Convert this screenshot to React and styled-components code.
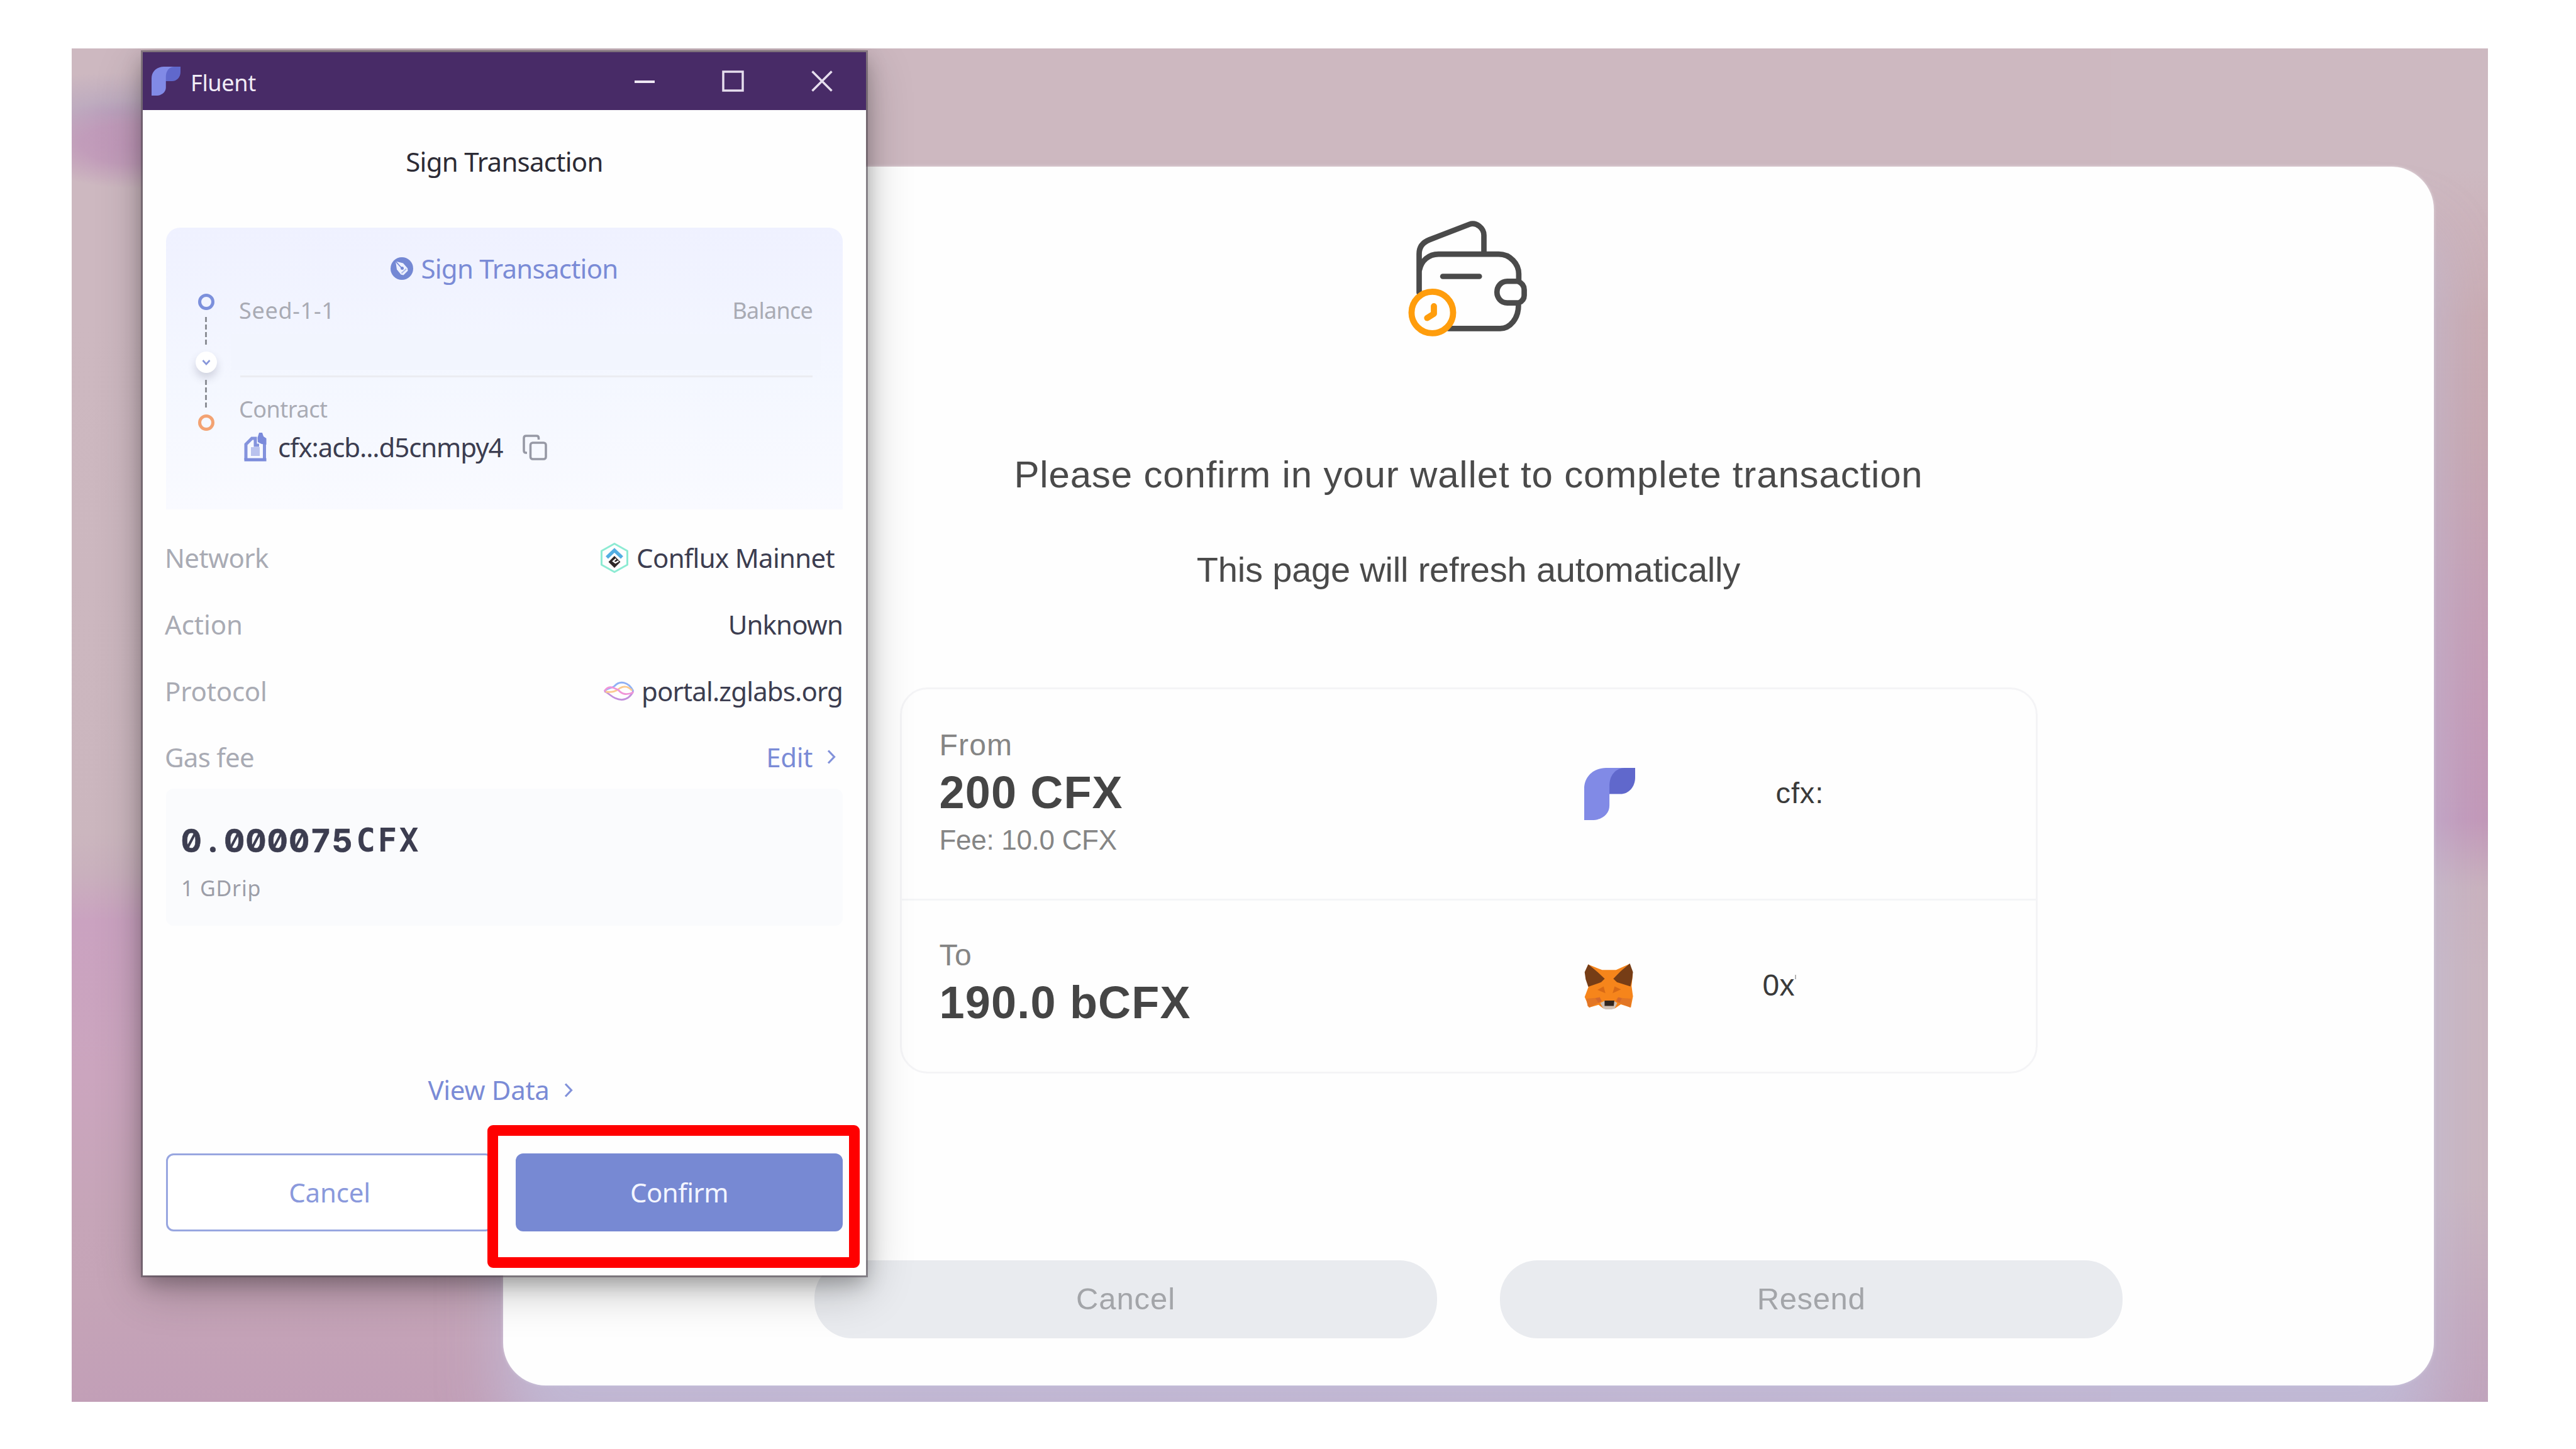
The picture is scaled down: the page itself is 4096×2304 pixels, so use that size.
import React from "react";
import styled, { createGlobalStyle } from "styled-components";

const Global = createGlobalStyle`
  * { box-sizing: border-box; }
  body { margin: 0; background: #fff; }
`;

const ui = `"Noto Sans", sans-serif`;
const web = `"Liberation Sans", Arial, sans-serif`;

/* ---------- text ---------- */

const Text = styled.span`
  display: block;
  white-space: nowrap;
  font-family: ${(p) => p.$font || ui};
  font-size: ${(p) => p.$size || 42}px;
  font-weight: ${(p) => p.$weight || 400};
  line-height: ${(p) => p.$line || 60}px;
  letter-spacing: ${(p) => p.$track || 0}px;
  color: ${(p) => p.$color || "#3c3d50"};
`;

/* ---------- page ---------- */

const Page = styled.div`
  width: 4096px;
  height: 2304px;
  padding: 77px 140px 75px 114px;
  background: #fff;
  overflow: hidden;
`;

const Stage = styled.div`
  position: relative;
  width: 3842px;
  height: 2152px;
  padding: 188px 0 0 686px;
  overflow: hidden;
  background:
    radial-gradient(ellipse 175px 70px at 95px 152px, #c098b9 0%, rgba(192, 152, 185, 0.85) 45%, rgba(192, 152, 185, 0) 100%),
    radial-gradient(ellipse 210px 66px at 70px 104px, rgba(176, 160, 190, 0.75) 0%, rgba(176, 160, 190, 0) 100%),
    linear-gradient(180deg, #cdb9c1 0%, #cdb9c1 9%, #ccb3bb 13%, #c9abb2 20%, #c7a7b0 29%, #c59fb4 40%, #c49ab6 49%, #c297b8 57%, #c9b1bd 62%, #cab5bf 68%, #cab5bf 84%, #c4a9bd 94%, #c1a4bc 100%) right top / 600px 100% no-repeat,
    linear-gradient(180deg, #cdb8c0 0%, #cdb8c0 20%, #cbb6be 58%, #c9b0bd 61%, #caa2c0 64.5%, #cba5be 76%, #c6a5b8 86%, #c5a4b7 92%, #c29fb7 100%);
`;

const DappCard = styled.main`
  display: flex;
  flex-direction: column;
  align-items: center;
  width: 3070px;
  height: 1938px;
  padding-top: 84px;
  border-radius: 68px;
  background: #fefefe;
  box-shadow: 0 100px 100px 0 rgba(192, 192, 222, 0.75), 0 0 5px rgba(255, 255, 255, 0.5);
`;

const WalletFigure = styled.figure`
  display: flex;
  height: 188px;
  margin: 0 2px 0 0;
`;

const Headline = styled(Text)`
  margin-top: 178px;
`;

const Subline = styled(Text)`
  margin-top: 71px;
`;

const Transfer = styled.section`
  width: 1809px;
  margin-top: 147px;
  border: 3px solid #f4f4f6;
  border-radius: 44px;
`;

const TransferRow = styled.div`
  display: flex;
  align-items: center;
  height: ${(p) => p.$height}px;
  padding-left: 60px;
  & + & {
    border-top: 3px solid #f4f5f7;
  }
`;

const Amount = styled.div`
  display: flex;
  flex-direction: column;
  width: 1025px;
  padding-bottom: 10px;
`;

const AmountValue = styled(Text)`
  margin-top: 2px;
  margin-bottom: ${(p) => p.$after || 0}px;
`;

const Brand = styled.div`
  display: flex;
  align-items: center;
  width: 82px;
`;

const Address = styled.div`
  display: flex;
  margin-left: ${(p) => p.$indent}px;
  padding-bottom: 3px;
`;

const Clipped = styled.i`
  width: 2px;
  height: 7px;
  margin: 13px 0 0 0;
  background: #b5b5b5;
`;

const PillRow = styled.div`
  display: flex;
  gap: 100px;
  margin-top: 297px;
`;

const Pill = styled.button`
  display: flex;
  align-items: center;
  justify-content: center;
  width: 990px;
  height: 124px;
  padding: 0 0 3px;
  border: 0;
  border-radius: 60px;
  background: #e9ebef;
`;

/* ---------- wallet window ---------- */

const Window = styled.aside`
  position: absolute;
  left: 113px;
  top: 6px;
  width: 1150px;
  height: 1945px;
  display: flex;
  flex-direction: column;
  background: #fefefe;
  box-shadow: 0 0 0 3px rgba(82, 72, 84, 0.55), 0 12px 30px rgba(0, 0, 0, 0.26), 0 22px 70px rgba(0, 0, 0, 0.24);
`;

const TitleBar = styled.header`
  display: flex;
  align-items: center;
  height: 92px;
  padding: 0 53px 0 14px;
  background: #482b67;
`;

const AppName = styled(Text)`
  flex: 1;
  margin-left: 16px;
  padding-top: 5px;
`;

const Controls = styled.div`
  display: grid;
  grid-template-columns: 32px 35px 34px;
  column-gap: 107px;
  align-items: center;
`;

const Body = styled.div`
  display: flex;
  flex-direction: column;
  padding: 0 37px;
`;

const Heading = styled(Text)`
  margin: 52px 0 75px;
  text-align: center;
`;

const Card = styled.section`
  height: 448px;
  padding-top: 35px;
  border-radius: 22px 22px 0 0;
  background: linear-gradient(180deg, #eff1ff 0%, #f4f7ff 55%, #f9faff 100%);
`;

const CardTitle = styled.div`
  display: flex;
  align-items: center;
  justify-content: center;
  gap: 12px;
`;

const Route = styled.div`
  display: flex;
  padding: 0 48px 0 47px;
`;

const Rail = styled.div`
  display: flex;
  flex-direction: column;
  align-items: center;
  gap: 11px;
  width: 33px;
  padding-top: 10px;
`;

const Ring = styled.i`
  width: 26px;
  height: 26px;
  border: 5.5px solid ${(p) => p.$color};
  border-radius: 50%;
`;

const Dashes = styled.i`
  width: 3px;
  height: 44px;
  background: repeating-linear-gradient(180deg, #8d9097 0 8px, transparent 8px 12px);
`;

const Down = styled.i`
  display: flex;
  align-items: center;
  justify-content: center;
  width: 34px;
  height: 34px;
  border-radius: 50%;
  background: #fff;
  box-shadow: 0 8px 14px rgba(60, 60, 90, 0.2);
`;

const Parties = styled.div`
  flex: 1;
  margin-left: 36px;
  padding-top: 12px;
`;

const Between = styled.div`
  display: flex;
  justify-content: space-between;
`;

const BlankBalance = styled.div`
  height: 57px;
  margin: 12px -13px 9px -12px;
  background: #f2f5fe;
`;

const Divider = styled.hr`
  height: 3px;
  margin: 0 0 0 2px;
  border: 0;
  background: #ebecf1;
`;

const ContractLabel = styled(Text)`
  margin-top: 26px;
`;

const ContractRow = styled.div`
  display: flex;
  align-items: center;
  margin-top: 5px;
  padding-left: 8px;
`;

const ContractAddress = styled(Text)`
  margin: 0 32px 0 18px;
`;

const Details = styled.dl`
  display: grid;
  grid-template-rows: 106px 106px 105px 105px;
  margin: 24px 0 -2px;
`;

const Detail = styled.div`
  display: flex;
  align-items: center;
  justify-content: space-between;
`;

const DetailName = styled(Text)`
  margin-left: -2px;
`;

const DetailValue = styled.div`
  display: flex;
  align-items: center;
  gap: ${(p) => p.$gap || 0}px;
  padding-right: ${(p) => p.$inset || 0}px;
`;

const GasBox = styled.section`
  height: 218px;
  padding: 51px 23px 0;
  border-radius: 12px;
  background: #fafbfd;
`;

const GasAmount = styled.div`
  display: flex;
  height: 64px;
`;

const Digit = styled(Text)`
  width: 34.3px;
  text-align: center;
  font-feature-settings: "zero", "tnum";
  -webkit-text-stroke: 0.6px currentColor;
`;

const Unit = styled(Text)`
  width: 34.3px;
  margin-left: ${(p) => (p.$first ? 3 : 0)}px;
  text-align: center;
`;

const GasPrice = styled(Text)`
  margin: 19px 0 0 1px;
`;

const ViewData = styled.a`
  display: flex;
  align-items: center;
  justify-content: center;
  gap: 23px;
  margin-top: 231px;
  padding-right: 13px;
`;

const Actions = styled.div`
  display: flex;
  gap: 36px;
  margin-top: 71px;
`;

const Action = styled.button`
  display: flex;
  align-items: center;
  justify-content: center;
  flex: 1;
  height: 124px;
  padding: 0;
  border: 3px solid ${(p) => (p.$primary ? "#7789d3" : "#98a6e0")};
  border-radius: 12px;
  background: ${(p) => (p.$primary ? "#7789d3" : "#fff")};
`;

const Highlight = styled.div`
  position: absolute;
  left: 548px;
  top: 1706px;
  width: 592px;
  height: 227px;
  border: 17px solid #ff0000;
  border-radius: 9px;
`;

/* ---------- drawings ---------- */

const FluentLogo = ({ w, h }) => (
  <svg width={w} height={h} viewBox="0 0 100 100" preserveAspectRatio="none">
    <path d="M0 100V40C0 17 18 0 43 0H90V30L49.5 50V72C49.5 88 36 100 15 100Z" fill="#818ae6" />
    <path d="M49.5 50V34C49.5 14 62 0 80 0H100V18C100 37 87 50 71 50Z" fill="#6068cc" />
  </svg>
);

const Minimise = () => (
  <svg width="32" height="34" viewBox="0 0 32 34"><path d="M0 18H32" stroke="#efe9f4" strokeWidth="4" /></svg>
);
const Maximise = () => (
  <svg width="35" height="34" viewBox="0 0 35 34"><rect x="2" y="2" width="31" height="30" fill="none" stroke="#e6deee" strokeWidth="3.5" /></svg>
);
const Close = () => (
  <svg width="34" height="34" viewBox="0 0 34 34"><path d="M1.500 1.500L32.500 32.500M32.500 1.500L1.500 32.500" stroke="#e6deee" strokeWidth="3.500" /></svg>
);

const PenBadge = () => (
  <svg width="36" height="36" viewBox="0 0 36 36">
    <circle cx="18" cy="18" r="18" fill="#7488d4" />
    <path d="M8 6.500L20 9.500L27 17.500L27.500 21.500L20.500 28.500L16.500 27.500L10 19.500Z" fill="#eef1ff" />
    <path d="M8 6.500L17.500 17" stroke="#7488d4" strokeWidth="1.800" />
    <circle cx="18.500" cy="17.500" r="2.500" fill="#7488d4" />
    <path d="M17.500 25.500L25 18.500" stroke="#a9b6e8" strokeWidth="1.800" />
  </svg>
);

const SmallDown = () => (
  <svg width="14" height="9" viewBox="0 0 14 9"><path d="M1.500 1L7 7L12.500 1" fill="none" stroke="#8796da" strokeWidth="2.600" /></svg>
);

const ContractIcon = () => (
  <svg width="36" height="46" viewBox="0 0 36 46">
    <path d="M3 43V18.500L12.500 9H18V20H24M32.500 12V43" fill="none" stroke="#8493dd" strokeWidth="5" />
    <path d="M0.500 43H35.500" stroke="#7c8cdb" strokeWidth="5" />
    <path d="M21.500 8L24 0H29L31 6L35.500 9V19L28 18L22 15Z" fill="#7a8adb" />
    <rect x="11" y="23" width="14" height="14" fill="#b9c2ee" />
  </svg>
);

const CopyIcon = () => (
  <svg width="39" height="41" viewBox="0 0 39 41" fill="none" stroke="#9799a5" strokeWidth="3.600">
    <rect x="12.500" y="13" width="24.500" height="26" rx="3.500" />
    <path d="M7 29H5.500Q2 29 2 25.500V5.500Q2 2 5.500 2H22Q25.500 2 25.500 5.500V8" />
  </svg>
);

const ConfluxIcon = () => (
  <svg width="46" height="50" viewBox="0 0 46 50">
    <path d="M23 2.500L43.500 14V36L23 47.500L2.500 36V14Z" fill="none" stroke="#8debd3" strokeWidth="3" strokeLinejoin="round" />
    <path d="M11 24.500L23 13L35 24.500" fill="none" stroke="#52ade2" strokeWidth="5.500" />
    <path d="M23 22L32.500 31.500L23 41L13.500 31.500Z" fill="#2e2727" />
    <path d="M25.500 26.500L21 30.500L24.500 33L29.500 30" fill="none" stroke="#fff" strokeWidth="2.200" />
  </svg>
);

const PortalIcon = () => (
  <svg width="51" height="31" viewBox="0 0 51 31" fill="none" strokeWidth="2.800">
    <path d="M2 16C8 10 13 12 18 8C26 -1 40 0 48 16" stroke="#8fb0f5" />
    <path d="M2 16C10 20 12 24 19 27C30 32 41 30 48 16" stroke="#c28fdc" />
    <path d="M4 17C14 18 20 17 27 11C34 7 41 9 46 15" stroke="#fbc98f" />
    <path d="M2 16C9 6 15 10 24 14C31 22 38 22 48 18" stroke="#f095d8" />
  </svg>
);

const Chevron = ({ w, h }) => (
  <svg width={w} height={h} viewBox="0 0 14 23"><path d="M2 1.500L11.500 11.500L2 21.500" fill="none" stroke="#8292da" strokeWidth="3.200" /></svg>
);

const WalletIcon = () => (
  <svg width="194" height="188" viewBox="230 180 850 825" fill="none" strokeLinecap="round">
    <g stroke="#4a4a4a" strokeWidth="38">
      <path d="M315 690V420Q315 350 385 322L665 214C715 196 767 240 767 290V415" />
      <path d="M318 530C330 470 380 422 450 422H870C950 422 1010 490 1010 560V600" />
      <path d="M1008 780C1008 870 950 941 880 941H520" />
      <path d="M480 577H735" />
      <path d="M930 611H1005Q1048 630 1048 670V710Q1048 745 1010 762H930C885 762 858 725 858 687C858 648 885 611 930 611Z" />
    </g>
    <g stroke="#ff9d0c">
      <circle cx="407" cy="829" r="145" strokeWidth="43" fill="#fefefe" />
      <path d="M418 785V838L371 867" strokeWidth="43" strokeLinejoin="round" />
    </g>
  </svg>
);

const FoxIcon = () => (
  <svg width="78" height="73" viewBox="0 0 342 240" preserveAspectRatio="none">
    <path d="M30 6L125 34H222L318 2L338 60L330 118L340 172L325 230L255 214L215 234H132L100 216L35 230L3 175L30 122L8 60Z" fill="#f6851b" />
    <path d="M28 4L95 46L143 80L118 98L28 122L10 82L3 45Z" fill="#763d16" />
    <path d="M318 0L252 42L203 80L228 98L322 120L334 82L340 45Z" fill="#763d16" />
    <path d="M14 184L108 178L122 198L35 230L24 222Z" fill="#e27625" />
    <path d="M328 184L232 178L218 198L322 230Z" fill="#e27625" />
    <path d="M92 138L135 120L148 155Z" fill="#cd6116" opacity="0.75" />
    <path d="M256 136L212 120L198 155Z" fill="#cd6116" opacity="0.75" />
    <path d="M78 182L108 176L122 196L100 206Z" fill="#cd6430" opacity="0.7" />
    <path d="M262 182L238 176L226 196L246 206Z" fill="#cd6430" opacity="0.7" />
    <path d="M112 206L142 196H206L230 206L212 236L190 240H150L134 236Z" fill="#d0bfb2" />
    <path d="M142 194H210L206 222H142Z" fill="#30241c" />
  </svg>
);

/* ---------- composition ---------- */

const muted = "#a9abb4";
const accent = "#7a8bd6";
const mono = `"DejaVu Sans Mono", monospace`;

function WalletWindow() {
  return (
    <Window>
      <TitleBar>
        <FluentLogo w={46} h={46} />
        <AppName $size={36} $line={50} $track={-0.3} $color="#f1ecf6">Fluent</AppName>
        <Controls><Minimise /><Maximise /><Close /></Controls>
      </TitleBar>
      <Body>
        <Heading $track={-0.72} $color="#2c2b35">Sign Transaction</Heading>
        <Card>
          <CardTitle>
            <PenBadge />
            <Text $track={-0.75} $color={accent}>Sign Transaction</Text>
          </CardTitle>
          <Route>
            <Rail>
              <Ring $color="#7c90dc" />
              <Dashes />
              <Down><SmallDown /></Down>
              <Dashes />
              <Ring $color="#f3a272" />
            </Rail>
            <Parties>
              <Between>
                <Text $size={36} $line={50} $track={0.7} $color={muted}>Seed-1-1</Text>
                <Text $size={36} $line={50} $track={-0.77} $color={muted}>Balance</Text>
              </Between>
              <BlankBalance />
              <Divider />
              <ContractLabel $size={36} $line={50} $track={-0.49} $color={muted}>Contract</ContractLabel>
              <ContractRow>
                <ContractIcon />
                <ContractAddress $track={-1.09}>cfx:acb...d5cnmpy4</ContractAddress>
                <CopyIcon />
              </ContractRow>
            </Parties>
          </Route>
        </Card>
        <Details>
          <Detail>
            <DetailName $track={-0.59} $color={muted}>Network</DetailName>
            <DetailValue $gap={12} $inset={13}><ConfluxIcon /><Text $track={-0.71}>Conflux Mainnet</Text></DetailValue>
          </Detail>
          <Detail>
            <DetailName $track={-0.08} $color={muted}>Action</DetailName>
            <DetailValue><Text $track={-0.9}>Unknown</Text></DetailValue>
          </Detail>
          <Detail>
            <DetailName $track={-0.2} $color={muted}>Protocol</DetailName>
            <DetailValue $gap={10}><PortalIcon /><Text $track={-0.87}>portal.zglabs.org</Text></DetailValue>
          </Detail>
          <Detail>
            <DetailName $track={-0.72} $color={muted}>Gas fee</DetailName>
            <DetailValue $gap={23} $inset={11}><Text $track={-0.34} $color={accent}>Edit</Text><Chevron w={14} h={23} /></DetailValue>
          </Detail>
        </Details>
        <GasBox>
          <GasAmount>
            {[..."0.000075"].map((c, i) => (
              <Digit key={i} $font="Inter, sans-serif" $size={51} $weight={700} $line={64}>{c}</Digit>
            ))}
            {[..."CFX"].map((c, i) => (
              <Unit key={c} $first={i === 0} $font={mono} $size={51} $weight={700} $line={64}>{c}</Unit>
            ))}
          </GasAmount>
          <GasPrice $size={34} $line={48} $track={0.8} $color="#9c9ea8">1 GDrip</GasPrice>
        </GasBox>
        <ViewData>
          <Text $track={-0.28} $color={accent}>View Data</Text>
          <Chevron w={14} h={23} />
        </ViewData>
        <Actions>
          <Action><Text $track={-0.18} $color="#8a99dc">Cancel</Text></Action>
          <Action $primary><Text $track={-0.55} $color="#f3f5ff">Confirm</Text></Action>
        </Actions>
      </Body>
      <Highlight />
    </Window>
  );
}

export default function App() {
  return (
    <Page>
      <Global />
      <Stage>
        <DappCard>
          <WalletFigure><WalletIcon /></WalletFigure>
          <Headline $font={web} $size={60} $line={80} $track={0.84} $color="#4a4a4a">
            Please confirm in your wallet to complete transaction
          </Headline>
          <Subline $font={web} $size={56} $line={80} $track={-0.2} $color="#4a4a4a">
            This page will refresh automatically
          </Subline>
          <Transfer>
            <TransferRow $height={333}>
              <Amount>
                <Text $font={web} $size={48} $track={1.2} $color="#858585">From</Text>
                <AmountValue $font={web} $size={72} $weight={700} $line={86} $track={1.15} $after={8} $color="#454545">200 CFX</AmountValue>
                <Text $font={web} $size={44} $line={50} $track={-0.3} $color="#858585">Fee: 10.0 CFX</Text>
              </Amount>
              <Brand><FluentLogo w={81} h={83} /></Brand>
              <Address $indent={223}>
                <Text $font={web} $size={47} $track={0.9} $color="#3a3a3a">cfx:</Text>
              </Address>
            </TransferRow>
            <TransferRow $height={275}>
              <Amount>
                <Text $font={web} $size={48} $track={0.6} $color="#858585">To</Text>
                <AmountValue $font={web} $size={72} $weight={700} $line={86} $track={1.2} $color="#454545">190.0 bCFX</AmountValue>
              </Amount>
              <Brand><FoxIcon /></Brand>
              <Address $indent={202}>
                <Text $font={web} $size={48} $track={0.3} $color="#3a3a3a">0x</Text>
                <Clipped />
              </Address>
            </TransferRow>
          </Transfer>
          <PillRow>
            <Pill><Text $font={web} $size={49} $track={0.9} $color="#a3a5a9">Cancel</Text></Pill>
            <Pill><Text $font={web} $size={49} $track={0.6} $color="#a3a5a9">Resend</Text></Pill>
          </PillRow>
        </DappCard>
        <WalletWindow />
      </Stage>
    </Page>
  );
}
